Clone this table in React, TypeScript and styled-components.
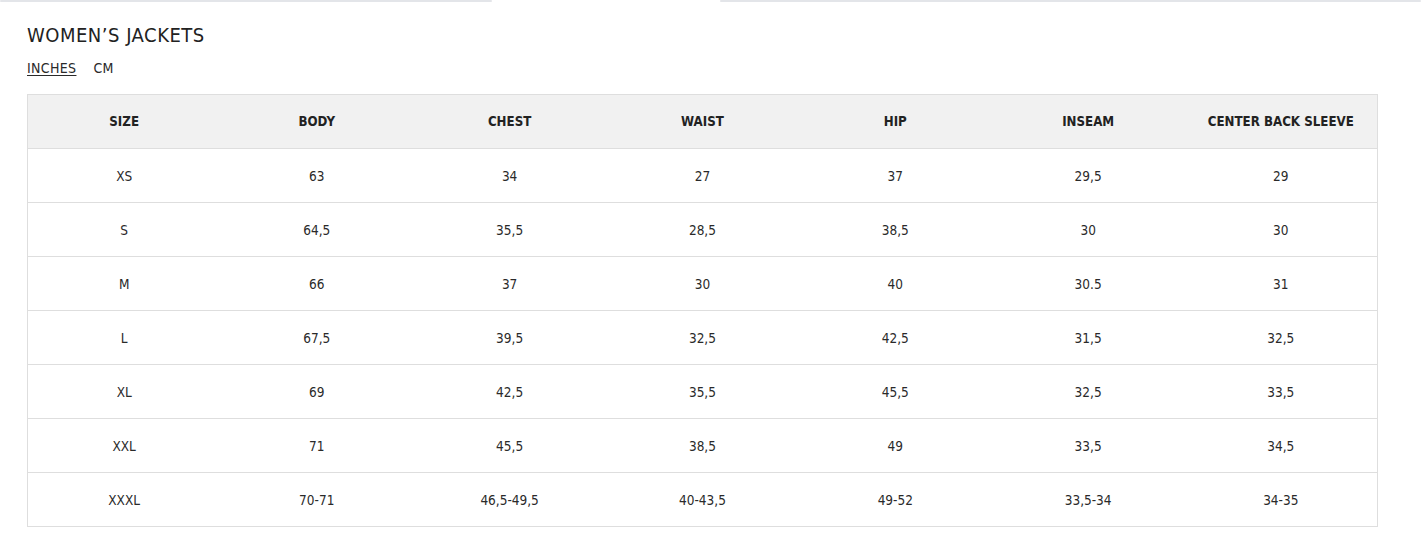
import React from "react";
import styled, { createGlobalStyle } from "styled-components";

const Global = createGlobalStyle`
  html, body { margin: 0; padding: 0; background: #fff; }
  body { font-family: "DejaVu Sans Condensed", "DejaVu Sans", sans-serif; font-stretch: condensed; color: #222; }
`;

const Page = styled.div`
  width: 1421px;
  min-height: 558px;
  background: #fff;
`;

const TabTrack = styled.div`
  display: flex;
  height: 2px;
`;

const TabSegment = styled.div<{ $active?: boolean; $width?: string }>`
  flex: ${(p) => (p.$width ? `0 0 ${p.$width}` : "1 1 auto")};
  background: ${(p) => (p.$active ? "#ffffff" : "#e3e5e9")};
  border-radius: 1px;
`;

const Content = styled.div`
  padding: 21px 43px 0 27px;
`;

const Title = styled.h2`
  margin: 0;
  font-size: 20px;
  line-height: 24px;
  font-weight: 400;
  letter-spacing: 0.5px;
  color: #222;
`;

const UnitRow = styled.div`
  display: flex;
  gap: 17px;
  margin-top: 12px;
`;

const UnitButton = styled.span<{ $active?: boolean }>`
  font-size: 14px;
  line-height: 18px;
  letter-spacing: 0.35px;
  color: #2a2a2a;
  text-decoration: ${(p) => (p.$active ? "underline" : "none")};
  text-underline-offset: 2px;
  cursor: pointer;
`;

const Table = styled.table`
  margin-top: 17px;
  width: 1351px;
  border-collapse: collapse;
  table-layout: fixed;
  border: 1px solid #dedede;
`;

const HeadCell = styled.th`
  height: 53px;
  padding: 0;
  background: #f1f1f1;
  font-size: 13.2px;
  font-weight: 700;
  color: #222;
  text-align: center;
  border-bottom: 1px solid #dedede;
`;

const Cell = styled.td`
  height: 53px;
  padding: 0;
  font-size: 13.5px;
  font-weight: 400;
  color: #2a2a2a;
  text-align: center;
  border-bottom: 1px solid #dedede;
`;

const headers = ["SIZE", "BODY", "CHEST", "WAIST", "HIP", "INSEAM", "CENTER BACK SLEEVE"];
const rows = [
  ["XS", "63", "34", "27", "37", "29,5", "29"],
  ["S", "64,5", "35,5", "28,5", "38,5", "30", "30"],
  ["M", "66", "37", "30", "40", "30.5", "31"],
  ["L", "67,5", "39,5", "32,5", "42,5", "31,5", "32,5"],
  ["XL", "69", "42,5", "35,5", "45,5", "32,5", "33,5"],
  ["XXL", "71", "45,5", "38,5", "49", "33,5", "34,5"],
  ["XXXL", "70-71", "46,5-49,5", "40-43,5", "49-52", "33,5-34", "34-35"],
];

export default function App() {
  return (
    <Page>
      <Global />
      <TabTrack>
        <TabSegment $width="492px" />
        <TabSegment $active $width="228px" />
        <TabSegment />
      </TabTrack>
      <Content>
        <Title>WOMEN’S JACKETS</Title>
        <UnitRow>
          <UnitButton $active>INCHES</UnitButton>
          <UnitButton>CM</UnitButton>
        </UnitRow>
        <Table>
          <thead>
            <tr>
              {headers.map((h) => (
                <HeadCell key={h}>{h}</HeadCell>
              ))}
            </tr>
          </thead>
          <tbody>
            {rows.map((r) => (
              <tr key={r[0]}>
                {r.map((c, i) => (
                  <Cell key={i}>{c}</Cell>
                ))}
              </tr>
            ))}
          </tbody>
        </Table>
      </Content>
    </Page>
  );
}
